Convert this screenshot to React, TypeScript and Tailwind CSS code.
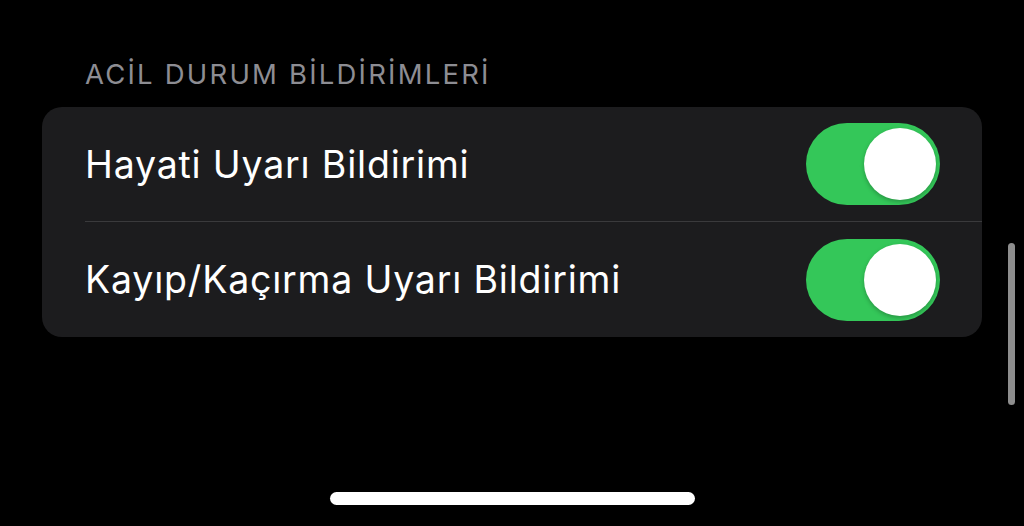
import React from "react";

function Toggle() {
  return (
    <div className="w-[134px] h-[82px] rounded-full bg-[#34c759] flex items-center justify-end pr-[4px] shrink-0">
      <div className="w-[72px] h-[72px] rounded-full bg-white shadow-[0_2px_4px_rgba(0,0,0,0.25)]" />
    </div>
  );
}

function Row({ label, divider }: { label: string; divider?: boolean }) {
  return (
    <div className={"flex items-center h-[115px] ml-[43px] pr-[42px] " + (divider ? "border-b-[1.5px] border-[#3a3a3c]" : "")}>
      <span className="flex-1 text-white text-[37.5px] leading-none tracking-[0.8px] pt-[1px]">{label}</span>
      <Toggle />
    </div>
  );
}

export default function App() {
  return (
    <div
      className="relative w-[1024px] h-[526px] bg-black overflow-hidden flex flex-col"
      style={{ fontFamily: "Inter, 'Noto Sans', sans-serif" }}
    >
      <div className="pt-[58px] px-[42px]">
        <div className="pl-[43px] text-[#8d8d93] text-[27.5px] leading-[32px] tracking-[2.2px]">ACİL DURUM BİLDİRİMLERİ</div>
        <div className="mt-[17px] bg-[#1c1c1e] rounded-[20px] overflow-hidden">
          <Row label="Hayati Uyarı Bildirimi" divider />
          <Row label="Kayıp/Kaçırma Uyarı Bildirimi" />
        </div>
      </div>
      <div className="mt-auto mb-[21px] self-center w-[365px] h-[13px] rounded-full bg-white" />
      <div className="absolute left-[1008px] top-[243px] w-[7px] h-[162px] rounded-full bg-[#8e8e8e]" />
    </div>
  );
}
